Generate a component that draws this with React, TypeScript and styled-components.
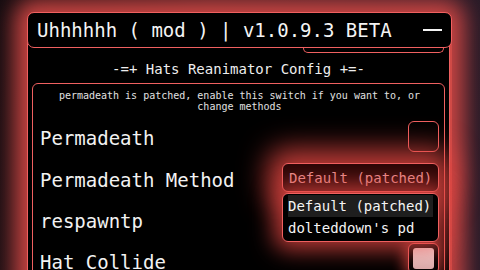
import React from "react";
import styled, { createGlobalStyle } from "styled-components";

const Global = createGlobalStyle`
  html, body { margin: 0; padding: 0; width: 480px; height: 270px; overflow: hidden; }
  body {
    background: linear-gradient(100deg, #140c10 0%, #3a1c22 40%, #241a28 100%);
    font-family: "DejaVu Sans Mono", "Liberation Mono", monospace;
    color: #f2f2f2;
  }
`;

const Page = styled.div`
  width: 480px;
  height: 270px;
  padding: 12px 28px 0 27px;
  box-sizing: border-box;
  overflow: hidden;
`;

const Window = styled.div`
  width: 425px;
  height: 300px;
  display: flex;
  flex-direction: column;
  border-radius: 7px;
  box-shadow: 0 0 22px 12px rgba(212, 72, 68, 0.95);
  background: #d04a46;
`;

const TitleBar = styled.div`
  height: 36px;
  box-sizing: border-box;
  background: #000;
  border: 1px solid #f06060;
  border-radius: 7px;
  display: flex;
  align-items: center;
  justify-content: space-between;
  padding: 0 9px 0 9px;
  font-size: 19px;
  color: #f4f4f4;
  position: relative;
  z-index: 2;
`;

const Minimize = styled.span`
  width: 19px;
  height: 2px;
  background: #f4f4f4;
`;

const Body = styled.div`
  flex: 1;
  margin-right: 2px;
  margin-top: -6px;
  padding-top: 6px;
  background: #000;
  border-left: 1px solid #f06060;
  border-right: 1px solid #f06060;
  display: flex;
  flex-direction: column;
`;

const Lip = styled.div`
  align-self: flex-end;
  width: 141px;
  height: 5px;
  margin-right: 5px;
  box-sizing: border-box;
  border: 1px solid #f06060;
  border-top: none;
  border-radius: 0 0 5px 5px;
`;

const Heading = styled.div`
  text-align: center;
  font-size: 14px;
  line-height: 16px;
  margin-top: 8px;
  color: #eeeeee;
`;

const Card = styled.div`
  margin: 6px 4px 0 4px;
  border: 1px solid #f06060;
  border-radius: 6px;
  padding: 6px 5px 0 7px;
  flex: 1;
  display: flex;
  flex-direction: column;
`;

const Note = styled.div`
  text-align: center;
  font-size: 10px;
  line-height: 11px;
  color: #e0e0e0;
  margin-bottom: 5px;
`;

const Row = styled.div<{ $h?: number }>`
  height: ${(p) => p.$h ?? 42}px;
  flex-shrink: 0;
  display: flex;
  align-items: center;
  justify-content: space-between;
  position: relative;
`;

const Label = styled.span`
  font-size: 19px;
  color: #f2f2f2;
  white-space: nowrap;
`;

const Checkbox = styled.div`
  width: 31px;
  height: 31px;
  box-sizing: border-box;
  border: 1px solid #f06060;
  border-radius: 6px;
  background: #000;
  margin-top: -3px;
`;

const DropWrap = styled.div`
  align-self: flex-start;
  margin-top: 4px;
  position: relative;
  width: 157px;
`;

const DropButton = styled.div`
  height: 29px;
  box-sizing: border-box;
  border: 1px solid #f06060;
  border-radius: 6px;
  background: #2a0606;
  color: #e89090;
  font-size: 14px;
  white-space: nowrap;
  display: flex;
  align-items: center;
  padding-left: 6px;
  box-shadow: 0 0 28px 14px rgba(226, 70, 66, 0.85);
`;

const Menu = styled.div`
  position: absolute;
  top: 30px;
  left: 0;
  width: 157px;
  box-sizing: border-box;
  background: #000;
  border: 1px solid #f06060;
  border-radius: 6px;
  padding: 1px 5px 2px 5px;
  z-index: 3;
  box-shadow: 0 0 22px 8px rgba(226, 70, 66, 0.8);
`;

const MenuItem = styled.div<{ $active?: boolean }>`
  height: 22px;
  display: flex;
  align-items: center;
  font-size: 14px;
  white-space: nowrap;
  color: #f4f4f4;
  background: ${(p) => (p.$active ? "#1e1e1e" : "transparent")};
`;

const Toggle = styled.div`
  width: 31px;
  height: 31px;
  box-sizing: border-box;
  border: 1px solid #f06060;
  border-radius: 6px;
  background: #000;
  align-self: flex-start;
  margin-top: 2px;
  padding: 4px;
  box-shadow: 0 0 14px 4px rgba(226, 70, 66, 0.7);
`;

const Knob = styled.div`
  width: 100%;
  height: 100%;
  border-radius: 3px;
  background: linear-gradient(180deg, #f3e2e2 0%, #d9aaaa 100%);
`;

export default function App() {
  return (
    <>
      <Global />
      <Page>
        <Window>
          <TitleBar>
            <span>Uhhhhhh ( mod ) | v1.0.9.3 BETA</span>
            <Minimize />
          </TitleBar>
          <Body>
            <Lip />
            <Heading>-=+ Hats Reanimator Config +=-</Heading>
            <Card>
              <Note>
                permadeath is patched, enable this switch if you want to, or
                <br />
                change methods
              </Note>
              <Row>
                <Label>Permadeath</Label>
                <Checkbox />
              </Row>
              <Row>
                <Label>Permadeath Method</Label>
                <DropWrap>
                  <DropButton>Default (patched)</DropButton>
                  <Menu>
                    <MenuItem $active>Default (patched)</MenuItem>
                    <MenuItem>dolteddown's pd</MenuItem>
                  </Menu>
                </DropWrap>
              </Row>
              <Row $h={40}>
                <Label>respawntp</Label>
              </Row>
              <Row>
                <Label>Hat Collide</Label>
                <Toggle>
                  <Knob />
                </Toggle>
              </Row>
            </Card>
          </Body>
        </Window>
      </Page>
    </>
  );
}
